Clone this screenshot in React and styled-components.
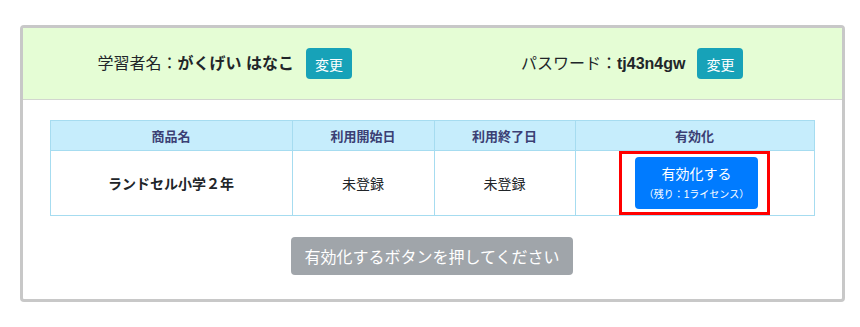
import React from 'react'
import styled, { createGlobalStyle } from 'styled-components';

const GlobalStyle = createGlobalStyle`
  html, body {
    margin: 0;
    padding: 0;
    background: #fff;
  }
  body {
    font-family: "Liberation Sans", "Noto Sans CJK JP", sans-serif;
    color: #212529;
  }
`;

const Page = styled.div`
  padding: 25px 15px 0 20px;
`;

const Card = styled.div`
  width: 819px;
  border: 3px solid #c8c8c8;
  border-radius: 4px;
  background: #fff;
`;

const Header = styled.div`
  height: 71px;
  display: grid;
  grid-template-columns: 1fr 1fr;
  background: #e5fdd5;
  border-bottom: 1px solid #d2d6cf;
`;

const Field = styled.div`
  display: flex;
  align-items: center;
  justify-content: center;
  gap: 12px;
  padding-right: ${p => p.$shift || 0}px;
`;

const Label = styled.span`
  font-size: 16px;
  line-height: 20px;
  white-space: pre;
`;

const Value = styled.b`
  font-weight: bold;
`;

const ChangeButton = styled.button`
  width: 46px;
  height: 31px;
  border: none;
  border-radius: 4px;
  background: #17a2b8;
  color: #fff;
  font-family: inherit;
  font-size: 14px;
  padding: 0;
`;

const Body = styled.div`
  padding: 20px 28px 24px 27px;
  display: flex;
  flex-direction: column;
  align-items: center;
`;

const Table = styled.table`
  width: 764px;
  border-collapse: collapse;
  table-layout: fixed;
`;

const Th = styled.th`
  height: 29px;
  padding: 0;
  background: #c6edfc;
  border: 1px solid #a6dcf0;
  color: #3b3f74;
  font-size: 13px;
  font-weight: bold;
  text-align: center;
`;

const Td = styled.td`
  height: 63px;
  padding: 0;
  border: 1px solid #a6dcf0;
  font-size: 14px;
  font-weight: ${p => (p.$bold ? 'bold' : 'normal')};
  text-align: center;
  vertical-align: middle;
`;

const Highlight = styled.div`
  display: inline-block;
  border: 3px solid #f00;
  padding: 3px 9px 3px 13px;
  vertical-align: middle;
`;

const ActivateButton = styled.button`
  width: 123px;
  height: 52px;
  border: none;
  border-radius: 4px;
  background: #007bff;
  color: #fff;
  font-family: inherit;
  padding: 0;
  display: flex;
  flex-direction: column;
  align-items: center;
  justify-content: center;

  span {
    font-size: 14px;
    line-height: 20px;
  }
  small {
    font-size: 10px;
    line-height: 14px;
    margin-top: 4px;
  }
`;

const SubmitButton = styled.button`
  margin-top: 21px;
  width: 282px;
  height: 38px;
  border: none;
  border-radius: 4px;
  background: #a0a5aa;
  color: #fff;
  font-family: inherit;
  font-size: 16px;
  padding: 0;
`;

const columns = [
  { title: '商品名', width: 242 },
  { title: '利用開始日', width: 142 },
  { title: '利用終了日', width: 141 },
  { title: '有効化', width: 239 },
];

function App() {
  return (
    <Page>
      <GlobalStyle />
      <Card>
        <Header>
          <Field $shift={6}>
            <Label>学習者名：<Value>がくげい はなこ</Value></Label>
            <ChangeButton>変更</ChangeButton>
          </Field>
          <Field $shift={10}>
            <Label>パスワード：<Value>tj43n4gw</Value></Label>
            <ChangeButton>変更</ChangeButton>
          </Field>
        </Header>

        <Body>
          <Table>
            <colgroup>
              {columns.map(c => <col key={c.title} style={{ width: c.width }} />)}
            </colgroup>
            <thead>
              <tr>
                {columns.map(c => <Th key={c.title}>{c.title}</Th>)}
              </tr>
            </thead>
            <tbody>
              <tr>
                <Td $bold>ランドセル小学２年</Td>
                <Td>未登録</Td>
                <Td>未登録</Td>
                <Td>
                  <Highlight>
                    <ActivateButton>
                      <span>有効化する</span>
                      <small>（残り：1ライセンス）</small>
                    </ActivateButton>
                  </Highlight>
                </Td>
              </tr>
            </tbody>
          </Table>

          <SubmitButton disabled>有効化するボタンを押してください</SubmitButton>
        </Body>
      </Card>
    </Page>
  )
}

export default App
